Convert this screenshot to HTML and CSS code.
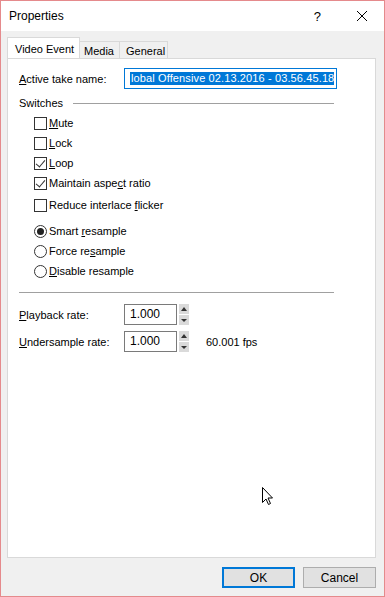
FILE: index.html
```html
<!DOCTYPE html>
<html lang="en">
<head>
    <meta charset="UTF-8">
    <title>Properties</title>
    <link rel="stylesheet" href="styles.css">
</head>
<body>
    <div class="window">
        <div class="titlebar">
            <span class="title">Properties</span>
            <span class="help">?</span>
            <span class="close">
                <svg width="12" height="12" viewBox="0 0 12 12"><path d="M1 1 L11 11 M11 1 L1 11" stroke="#000" stroke-width="1" fill="none"/></svg>
            </span>
        </div>

        <div class="client">
            <div class="tabs">
                <div class="tab selected">Video Event</div>
                <div class="tab media">Media</div>
                <div class="tab general">General</div>
            </div>

            <div class="panel">
                <div class="row name-row">
                    <span class="label"><u>A</u>ctive take name:</span>
                    <div class="textbox">
                        <span class="sel">lobal Offensive 02.13.2016 - 03.56.45.18</span><span class="caret"></span>
                    </div>
                </div>

                <div class="group-head">
                    <span>Switches</span>
                    <span class="group-line"></span>
                </div>

                <!-- checkboxes -->
                <div class="option"><span class="check"></span><span><u>M</u>ute</span></div>
                <div class="option"><span class="check"></span><span><u>L</u>ock</span></div>
                <div class="option"><span class="check on"></span><span><u>L</u>oop</span></div>
                <div class="option"><span class="check on"></span><span>Maintain aspe<u>c</u>t ratio</span></div>
                <div class="option reduce"><span class="check"></span><span>Reduce interlace <u>f</u>licker</span></div>

                <!-- radios -->
                <div class="option smart"><span class="radio on"></span><span>Smart <u>r</u>esample</span></div>
                <div class="option"><span class="radio"></span><span>Force re<u>s</u>ample</span></div>
                <div class="option"><span class="radio"></span><span><u>D</u>isable resample</span></div>

                <div class="separator"></div>

                <div class="row rate-row first">
                    <span class="label"><u>P</u>layback rate:</span>
                    <div class="num-box">1.000</div>
                    <div class="spin"><span class="up"></span><span class="down"></span></div>
                </div>
                <div class="row rate-row">
                    <span class="label"><u>U</u>ndersample rate:</span>
                    <div class="num-box">1.000</div>
                    <div class="spin"><span class="up"></span><span class="down"></span></div>
                    <span class="fps">60.001 fps</span>
                </div>

                <svg class="cursor" width="12" height="19" viewBox="0 0 12 19">
                    <path d="M0.5 0.5 L0.5 15.5 L4 12 L6.5 17.5 L8.5 16.5 L6 11 L10.5 11 Z" fill="#fff" stroke="#000" stroke-width="1" stroke-linejoin="miter"/>
                </svg>
            </div>

            <div class="buttons">
                <div class="btn default">OK</div>
                <div class="btn">Cancel</div>
            </div>
        </div>
    </div>
</body>
</html>
```

FILE: styles.css
```css
body {
    margin: 0;
    padding: 0;
    font-family: "Segoe UI", "Liberation Sans", Arial, sans-serif;
    font-size: 11px;
    color: #000;
}

u {
    text-decoration: underline;
    text-underline-offset: 1px;
}

.window {
    width: 385px;
    height: 597px;
    box-sizing: border-box;
    border: 1px solid #e58a8c;
    display: flex;
    flex-direction: column;
    background-color: #f0f0f0;
}

.titlebar {
    height: 30px;
    background-color: white;
    display: flex;
    align-items: center;
    padding-left: 8px;
    font-size: 12px;
}

.title {
    flex: 1;
    padding-bottom: 1px;
}

.help {
    font-size: 13px;
    margin-right: 35px;
}

.close {
    display: flex;
    margin-right: 16px;
}

.client {
    flex: 1;
    display: flex;
    flex-direction: column;
    padding: 6px 8px 0 6px;
}

.tabs {
    display: flex;
    align-items: flex-end;
    height: 21px;
}

.tab {
    height: 17px;
    box-sizing: border-box;
    border: 1px solid #d9d9d9;
    border-bottom: none;
    border-left: none;
    padding: 1px 0 0 4px;
    line-height: 16px;
    font-size: 11px;
    white-space: nowrap;
}

.tab.media {
    width: 40px;
}

.tab.general {
    width: 48px;
    padding-left: 6px;
}

.tab.selected {
    width: 73px;
    height: 22px;
    margin-bottom: -1px;
    background-color: white;
    border-left: 1px solid #d9d9d9;
    padding: 3px 0 0 7px;
    line-height: 16px;
    position: relative;
}

.panel {
    height: 500px;
    box-sizing: border-box;
    background-color: white;
    border: 1px solid #d9d9d9;
    padding: 0 0 0 11px;
    position: relative;
}

.row {
    display: flex;
    align-items: center;
}

.label {
    width: 105px;
}

.name-row {
    margin-top: 9px;
    height: 21px;
}

.textbox {
    width: 213px;
    height: 21px;
    box-sizing: border-box;
    border: 1px solid #0078d7;
    padding: 0 3px 0 5px;
    display: flex;
    align-items: center;
    white-space: nowrap;
    overflow: hidden;
}

.sel {
    background-color: #0078d7;
    color: white;
    font-size: 11px;
    letter-spacing: 0.12px;
    line-height: 13px;
    padding: 0 0 0 1px;
}

.caret {
    width: 1px;
    height: 13px;
    background-color: #8a4a10;
}

.group-head {
    display: flex;
    align-items: center;
    height: 16px;
    margin-top: 6px;
}

.group-line {
    flex: 1;
    height: 1px;
    background-color: #a0a0a0;
    margin: 1px 41px 0 10px;
}

.option {
    display: flex;
    align-items: center;
    height: 20px;
    padding-left: 15px;
}

.group-head + .option {
    margin-top: 2px;
}

.option.reduce {
    margin-top: 2px;
}

.option.smart {
    margin-top: 6px;
}

.check {
    width: 13px;
    height: 13px;
    box-sizing: border-box;
    border: 1px solid #333;
    background-color: white;
    margin-right: 2px;
    position: relative;
}

.check.on::after {
    content: "";
    position: absolute;
    left: 3px;
    top: 0px;
    width: 4px;
    height: 8px;
    border-right: 1px solid #333;
    border-bottom: 1px solid #333;
    transform: rotate(40deg);
}

.radio {
    width: 13px;
    height: 13px;
    box-sizing: border-box;
    border: 1px solid #333;
    border-radius: 50%;
    background-color: white;
    margin-right: 2px;
    display: flex;
    align-items: center;
    justify-content: center;
}

.radio.on::after {
    content: "";
    width: 7px;
    height: 7px;
    border-radius: 50%;
    background-color: #222;
}

.separator {
    height: 1px;
    background-color: #a0a0a0;
    margin: 11px 41px 0 0;
}

.rate-row {
    height: 21px;
    margin-top: 6px;
}

.rate-row.first {
    margin-top: 11px;
}

.num-box {
    width: 53px;
    height: 21px;
    box-sizing: border-box;
    border: 1px solid #7a7a7a;
    padding-left: 5px;
    line-height: 19px;
    font-size: 12px;
}

.spin {
    width: 10px;
    height: 21px;
    margin-left: 2px;
    display: flex;
    flex-direction: column;
    gap: 1px;
}

.spin span {
    flex: 1;
    background-color: #dadada;
    display: flex;
    align-items: center;
    justify-content: center;
}

.spin .up::after {
    content: "";
    border-left: 3px solid transparent;
    border-right: 3px solid transparent;
    border-bottom: 4px solid #333;
}

.spin .down::after {
    content: "";
    border-left: 3px solid transparent;
    border-right: 3px solid transparent;
    border-top: 3px solid #333;
}

.fps {
    margin-left: 17px;
}

.cursor {
    position: absolute;
    left: 254px;
    top: 428px;
}

.buttons {
    display: flex;
    justify-content: flex-end;
    gap: 8px;
    margin-top: 9px;
    padding-right: 0;
}

.btn {
    width: 73px;
    height: 21px;
    box-sizing: border-box;
    border: 1px solid #adadad;
    background-color: #e1e1e1;
    display: flex;
    align-items: center;
    justify-content: center;
    font-size: 12px;
}

.btn.default {
    border: 2px solid #0078d7;
}
```
